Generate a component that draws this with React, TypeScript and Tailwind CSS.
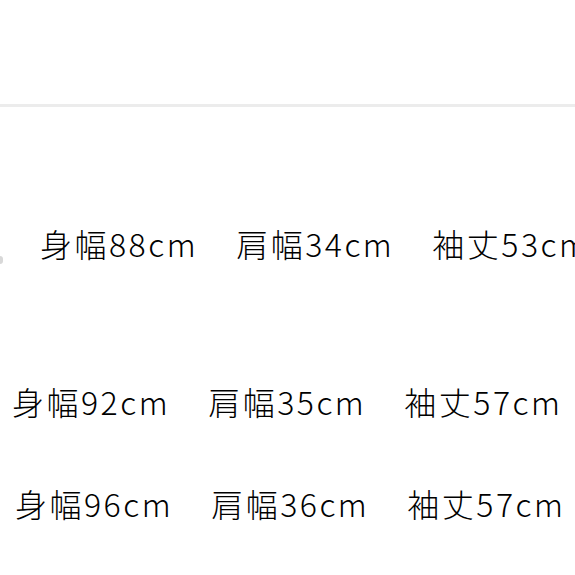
import React from 'react';

const rows = [
  { pad: 'pl-[40px] mt-[119px]', items: ['身幅88cm', '肩幅34cm', '袖丈53cm'] },
  { pad: 'pl-[12px] mt-[124px]', items: ['身幅92cm', '肩幅35cm', '袖丈57cm'] },
  { pad: 'pl-[15px] mt-[68px]', items: ['身幅96cm', '肩幅36cm', '袖丈57cm'] },
];

const App: React.FC = () => {
  return (
    <div className="w-[575px] h-[575px] overflow-hidden bg-white text-black relative">
      <div className="h-[104px]" />
      <div className="h-[3px] bg-[#ececec]" />
      <div className="absolute left-0 top-[256px] w-[3px] h-[8px] rounded-r-full bg-[#d8d8d8]" />
      {rows.map((row, i) => (
        <div
          key={i}
          className={`${row.pad} flex gap-[38px] whitespace-nowrap text-[32px] leading-[34px] font-light tracking-[2.5px]`}
          style={{ fontFamily: '"Noto Sans CJK JP", "Noto Sans", sans-serif' }}
        >
          {row.items.map((t) => (
            <span key={t}>{t}</span>
          ))}
        </div>
      ))}
    </div>
  );
};

export default App;
